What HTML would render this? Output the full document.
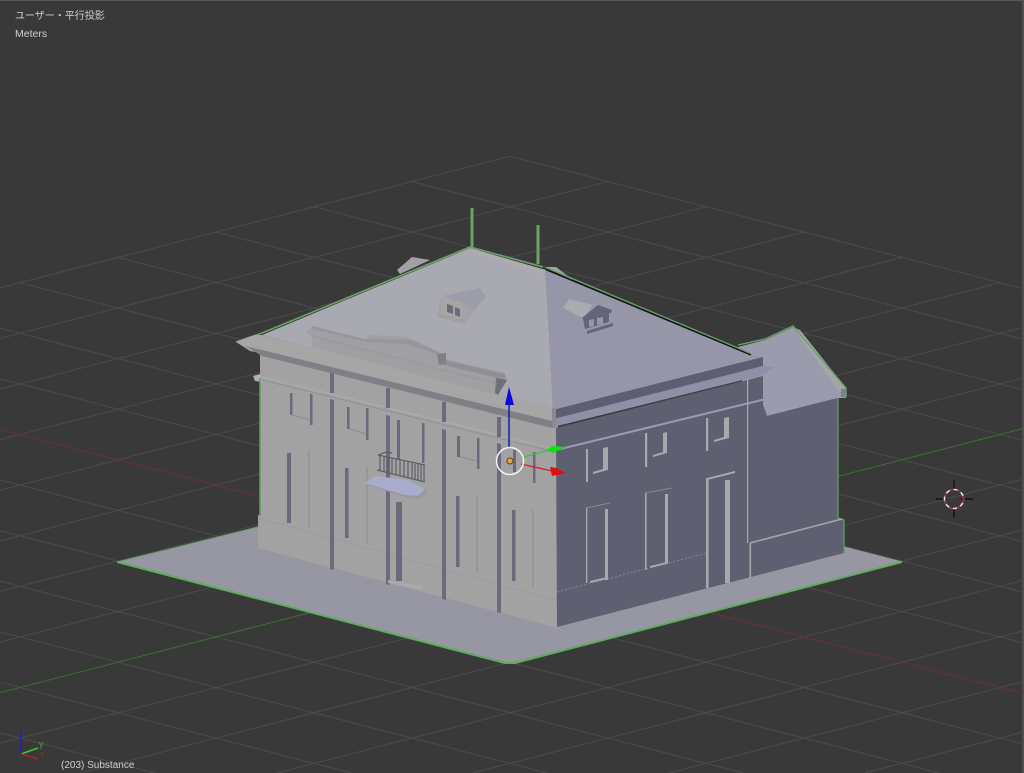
<!DOCTYPE html>
<html><head><meta charset="utf-8"><title>Viewport</title>
<style>
html,body{margin:0;padding:0;background:#393939;width:1024px;height:773px;overflow:hidden;}
#v{position:relative;width:1024px;height:773px;overflow:hidden;background:#393939;}
svg{position:absolute;left:0;top:0;display:block;filter:blur(.35px);}
.t{position:absolute;color:#cfcfcf;font-family:"Liberation Sans","Noto Sans CJK JP",sans-serif;font-size:10px;line-height:12px;white-space:nowrap;}
</style></head><body><div id="v">
<svg width="1024" height="773" viewBox="0 0 1024 773">
<rect x="0" y="0" width="1024" height="1" fill="#585858"/>
<rect x="1022" y="0" width="2" height="773" fill="#505050"/>
<g transform="matrix(98 25.3 98 -25.3 510 561)" fill="none">
<path vector-effect="non-scaling-stroke" stroke="#4b4b4b" stroke-width="1" d="M.8 -6H2.380M-.2 -5H3.380M-1.200 -4H4.380M-2.200 -3H5.380M-3.200 -2H6.380M-4.200 -1H7.380M-6.200 1H4.240M-7.200 2H3.240M-8 3H2.240M-8 4H1.240M-8 5H.24M-8 6H-.76M-8 7H-1.760M-8 8H-2.760M-8 2.800V8M-7 1.800V8M-6 .8V8M-5 -.2V8M-4 -1.200V8M-3 -2.200V8M-2 -3.200V7.240M-1 -4.200V6.240M1 -6.200V4.240M2 -6.380V3.240M3 -5.380V2.240M4 -4.380V1.240M5 -3.380V.24M6 -2.380V-.76"/>
<path vector-effect="non-scaling-stroke" stroke="#6f2f2f" stroke-width="1" d="M-5.200 0H5.240"/>
<path vector-effect="non-scaling-stroke" stroke="#3f6f38" stroke-width="1" d="M0 -5.200V5.240"/>
</g>
<!-- plate -->
<polygon points="117,562 260,526 844,547 902,562 515,662 505,662" fill="#9797a3"/>
<polyline points="117,562 505,663 515,663 902,562" fill="none" stroke="#5cae5c" stroke-width="2"/>
<polyline points="117,562 258,527" fill="none" stroke="#6f9a6f" stroke-width="1"/>
<polyline points="844,547 902,562" fill="none" stroke="#9a9aa6" stroke-width="1"/>
<!-- back bumps -->
<polygon points="397,270 412,257 430,260 400,274" fill="#a2a2a6"/>
<polygon points="545,267 556,267 573,280" fill="#a2a2a6"/>
<!-- left wall -->
<polygon points="260,345 558,420 558,628 258,548 258,515 260,515" fill="#a2a2a2"/>
<polyline points="258,518 555,600" fill="none" stroke="#9b9b9b" stroke-width="1"/>
<polyline points="262,380 555,452" fill="none" stroke="#939393" stroke-width="1.2"/>
<polyline points="262,377 555,449" fill="none" stroke="#adadad" stroke-width="1"/>
<polygon points="253,376 260,374 262,382 255,381" fill="#b0b0b0"/>
<polyline points="260,378 260,515 258,516" fill="none" stroke="#5f9f5f" stroke-width="1.5"/>
<!-- pilasters & windows left -->
<g fill="#6a6a7c">
<rect x="330" y="373" width="4" height="20"/><polygon points="330,399 334,400 334,570 330,569"/>
<rect x="386" y="388" width="4" height="20"/><polygon points="386,415 390,416 390,585 386,584"/>
<rect x="442" y="402" width="4" height="20"/><polygon points="442,429 446,430 446,600 442,599"/>
<rect x="497" y="417" width="4" height="20"/><polygon points="497,443 501,444 501,613 497,612"/>
<rect x="290" y="393" width="2.5" height="22"/><rect x="310" y="394" width="2.5" height="31"/>
<rect x="347" y="407" width="2.5" height="22"/><rect x="366" y="408" width="2.5" height="32"/>
<rect x="397" y="420" width="3" height="40"/><rect x="422" y="423" width="2.5" height="40"/>
<rect x="457" y="436" width="3" height="21"/><rect x="477" y="438" width="2.5" height="31"/>
<rect x="513" y="450" width="3" height="22"/><rect x="533" y="452" width="2.5" height="31"/>
<rect x="287" y="453" width="4" height="70"/>
<rect x="345" y="468" width="3.5" height="70"/>
<rect x="396" y="502" width="6" height="79"/>
<rect x="456" y="496" width="3.5" height="71"/>
<rect x="512" y="510" width="3.5" height="71"/>
</g>
<g stroke="#8a8a92" stroke-width="1" fill="none">
<path d="M309 450V528M367 467V543M477 495V572M533 510V587"/>
<path d="M292 415L310 420M349 429L366 434M460 457L477 461"/>
</g>
<polygon points="388,583 423,590 423,586 388,580" fill="#a9a9a9"/>
<!-- balcony -->
<g stroke="#5c5c68" stroke-width="1.2" fill="none">
<path d="M378 455L425 465M377 470L425 482M380 455V471M384 456V472M388 457V473M392 458V474M396 459V475M400 460V476M404 461V477M408 462V478M412 463V479M415 464V480M418 464V481M421 465V481M424 465V482"/>
<path d="M378 455L386 452L392 453"/>
</g>
<polygon points="364,484 405,497 418,499 426,494 426,488 405,490" fill="#98989e"/>
<polygon points="364,483 376,476 408,480 425,489 418,496 405,495" fill="#a9accc"/>
<!-- wing roof -->
<polygon points="738,347 765,340 793,327 845,390 846,398 838,398 767,416 763,405 745,405" fill="#9b9bae"/>
<polygon points="793,327 800,330 846,388 846,398 838,390" fill="#a6a6aa"/>
<rect x="841" y="389" width="5" height="8" fill="#7f7f92"/>
<polyline points="738,345 765,339 793,326 846,388 846,397" fill="none" stroke="#62a562" stroke-width="1.4"/>
<!-- right wall -->
<polygon points="556,428 763,376 763,405 767,416 838,398 838,518 844,520 844,553 557,627" fill="#5f5f72"/>
<polyline points="838,398 838,518 844,520 844,553" fill="none" stroke="#5f9f5f" stroke-width="1.3"/>
<polyline points="557,592 707,553" fill="none" stroke="#83839a" stroke-width="1" stroke-dasharray="2 2"/>
<polyline points="750,543 842,519" fill="none" stroke="#a2a2b0" stroke-width="1.6"/>
<polyline points="556,450 770,398" fill="none" stroke="#9a9ab0" stroke-width="2"/>
<polygon points="765,397 770,396 770,400 765,402" fill="#9a9ab0"/>
<g fill="#a8a8ac">
<rect x="586" y="449" width="2" height="33"/><polygon points="603,448 608,447 608,470 593,474 593,472 603,469"/>
<rect x="645" y="433" width="2.2" height="34"/><polygon points="663,433 667,432 667,453 653,457 653,455 663,452"/>
<rect x="706" y="418" width="2.2" height="33"/><polygon points="724,418 729,417 729,438 714,442 714,440 724,437"/>
<rect x="586" y="508" width="1.4" height="75"/><rect x="605" y="509" width="3" height="71"/>
<polygon points="590,583 607,579 607,577 590,581"/>
<rect x="645" y="493" width="1.6" height="77"/><rect x="665" y="494" width="3" height="70"/>
<polygon points="650,568 667,564 667,562 650,566"/>
<rect x="706" y="478" width="2.6" height="110"/><rect x="725" y="480" width="5" height="103"/>
<polygon points="707,478 735,471 735,473 707,480"/>
<rect x="747" y="375" width="1.2" height="168"/><rect x="749.500" y="543" width="1.6" height="35"/>
</g>
<polyline points="586,508 610,503" stroke="#88889a" stroke-width="1" fill="none"/>
<polyline points="645,493 672,488" stroke="#88889a" stroke-width="1" fill="none"/>
<!-- roof left -->
<polyline points="236,342 262,333 470,247 543,267" fill="none" stroke="#69a369" stroke-width="1.6"/>
<polygon points="262,335 470,248 546,270 553,408" fill="#a9a9b2"/>
<polygon points="470,248 545,270 545,274 470,252" fill="#adadae"/>
<polyline points="545,270 552,408" fill="none" stroke="#c2c2c4" stroke-width="1" stroke-dasharray="1 12"/>
<polygon points="236,342 255,335 262,335 552,407 552,428 260,353 250,351" fill="#a6a6a6"/>
<polygon points="245,346 262,350 552,421 552,428 262,356" fill="#7f7f85"/>
<!-- attic -->
<polygon points="305,333 312,326 365,339 370,335 408,337 443,354 446,359 505,373 507,380 497,395 312,347 312,336" fill="#a0a0a2"/>
<polygon points="312,326 365,339 412,340 443,354 443,357 408,344 365,342 312,329" fill="#96969c"/>
<polygon points="444,360 505,374 505,380 444,365" fill="#8f8f96"/>
<polygon points="437,354 446,353 446,364 439,365" fill="#808088"/>
<polygon points="496,378 507,380 498,395 495,393" fill="#6f6f7a"/>
<polyline points="312,336 443,370 497,384" fill="none" stroke="#98989c" stroke-width="1"/>
<!-- dormer 1 -->
<polygon points="440,298 480,288 486,297 465,323 438,315" fill="#a2a2a8"/>
<polygon points="443,296 480,288 486,297 474,310 462,303" fill="#9c9caa"/>
<polygon points="443,297 463,303 463,320 440,313" fill="#a6a6a6"/>
<polygon points="447,304 453,306 453,314 447,312" fill="#6a6a78"/>
<polygon points="455,307 460,309 460,317 455,315" fill="#6a6a78"/>
<polygon points="438,313 465,320 465,324 438,317" fill="#a0a0a0"/>
<!-- roof right -->
<polyline points="546,267.500 751,353.500" fill="none" stroke="#62a562" stroke-width="1.3"/>
<polygon points="545,270 750,355 763,357 553,410" fill="#9696a8"/>
<polyline points="546,269.500 751,355" fill="none" stroke="#12121a" stroke-width="1.3"/>
<polygon points="553,410 763,357 763,366 553,419" fill="#5e5e72"/>
<polygon points="553,419 763,366 775,367 763,375 553,427" fill="#8f8fa8"/>
<polygon points="552,408 556,408 556,428 552,428" fill="#8a8a95"/>
<!-- dormer 2 -->
<polygon points="563,308 569,299 593,305 583,318" fill="#abacb2"/>
<polygon points="582,318 598,305 612,310 611,313 609,313 609,322 585,329 583,319" fill="#63637a"/>
<polygon points="589,320 594,319 594,326 589,327" fill="#9696a8"/>
<polygon points="597,318 603,317 603,324 597,325" fill="#9696a8"/>
<polygon points="587,331 613,323 613,326 587,334" fill="#63637a"/>
<!-- antennae -->
<path d="M472 208V247" stroke="#69a369" stroke-width="3" fill="none"/>
<path d="M538 225V264" stroke="#69a369" stroke-width="3" fill="none"/>
<!-- gizmo -->
<path d="M509 392V448" stroke="#1818b8" stroke-width="1.5"/>
<polygon points="505,405 509,387 514,405" fill="#0a0adc"/>
<path d="M521 458L553 449" stroke="#3fc03f" stroke-width="1.2"/>
<polygon points="546,450 553,446 566,447 553,453" fill="#10e010"/>
<path d="M521 464L552 471" stroke="#d02020" stroke-width="1.2"/>
<polygon points="550,467 556,468 566,473 552,476" fill="#e01010"/>
<circle cx="510" cy="461" r="13.500" fill="none" stroke="#f2f2f2" stroke-width="1.5"/>
<circle cx="510" cy="461" r="3" fill="#e8a040" stroke="#5a4020" stroke-width="1"/>
<!-- 3D cursor -->
<path d="M936 499H947M961 499H973M954 480V491M954 507V518" stroke="#0c0c0c" stroke-width="1.2"/>
<circle cx="954" cy="499" r="9.500" fill="none" stroke="#e8e8e8" stroke-width="1.6"/>
<circle cx="954" cy="499" r="9.500" fill="none" stroke="#a02040" stroke-width="1.6" stroke-dasharray="4 4"/>
<!-- mini axis -->
<path d="M21 754V731" stroke="#2020c0" stroke-width="1.6"/>
<path d="M21 754L38 748" stroke="#40c040" stroke-width="1.6"/>
<path d="M21 754L38 759" stroke="#a02828" stroke-width="1.6"/>
<text x="23" y="730" font-size="9" fill="#3030a0" font-family="Liberation Sans,sans-serif">z</text>
<text x="39" y="747" font-size="9" fill="#40a040" font-family="Liberation Sans,sans-serif">y</text>
<text x="40" y="757" font-size="9" fill="#a02828" font-family="Liberation Sans,sans-serif">x</text>
</svg>
<div class="t" style="left:15px;top:11px;">ユーザー・平行投影</div>
<div class="t" style="left:15px;top:28px;font-size:10.5px;">Meters</div>
<div class="t" style="left:61px;top:760px;">(203) Substance</div>
</div></body></html>
